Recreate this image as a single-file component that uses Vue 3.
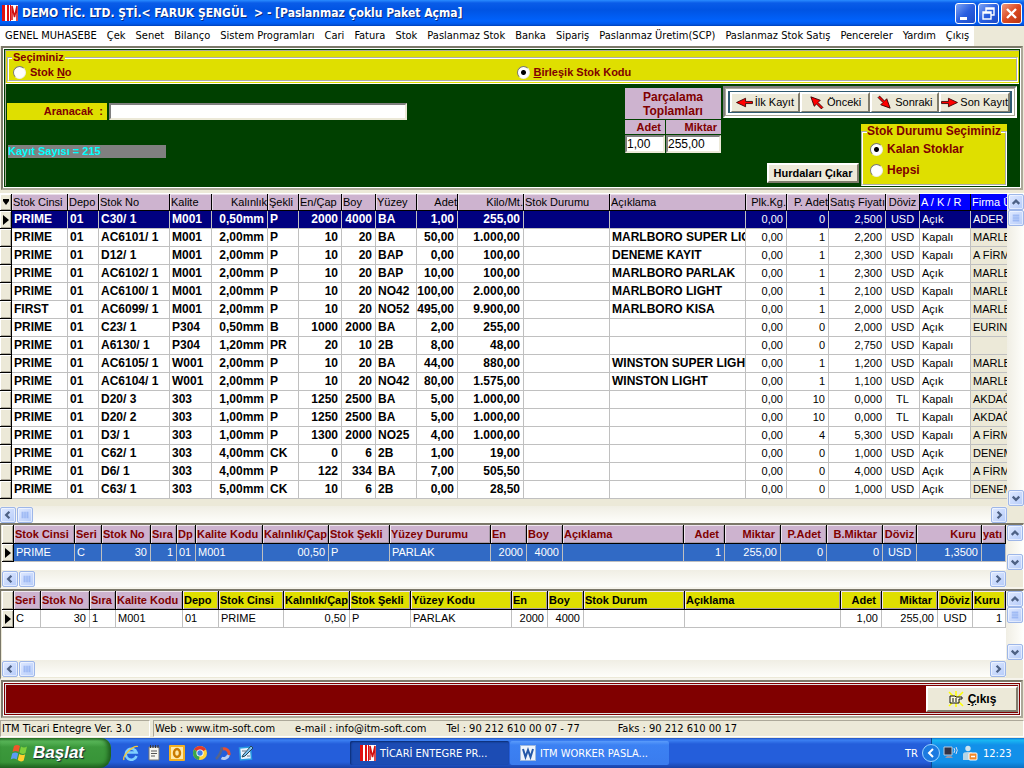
<script setup>
import { ref } from 'vue'

const menu = ['GENEL MUHASEBE', 'Çek', 'Senet', 'Bilanço', 'Sistem Programları', 'Cari', 'Fatura', 'Stok', 'Paslanmaz Stok', 'Banka', 'Sipariş', 'Paslanmaz Üretim(SCP)', 'Paslanmaz Stok Satış', 'Pencereler', 'Yardım', 'Çıkış']

const searchMode = ref('birlesik')
const stockMode = ref('kalan')

const nav = [
  { label: 'İlk Kayıt', turn: 180 },
  { label: 'Önceki', turn: 225 },
  { label: 'Sonraki', turn: 45 },
  { label: 'Son Kayıt', turn: 0 },
]

// column: [title, width, alignment, style]
const stockCols = [
  ['Stok Cinsi', 56, 'l', 'b'], ['Depo', 31, 'l', 'b'], ['Stok No', 71, 'l', 'b'], ['Kalite', 42, 'l', 'b'],
  ['Kalınlık', 56, 'r', 'b'], ['Şekli', 31, 'l', 'b'], ['En/Çap', 43, 'r', 'b', 'l'], ['Boy', 34, 'r', 'b', 'l'],
  ['Yüzey', 41, 'l', 'b'], ['Adet', 41, 'r', 'b'], ['Kilo/Mt.', 66, 'r', 'b'], ['Stok Durumu', 86, 'l', 'b'],
  ['Açıklama', 136, 'l', 'b'], ['Plk.Kg.', 41, 'r', ''], ['P. Adet', 42, 'r', ''], ['Satış Fiyatı', 57, 'r', ''],
  ['Döviz', 34, 'c', ''], ['A / K / R', 51, 'l', 'blue'], ['Firma Ünvanı', 0, 'l', 'blue firm'],
]
const stockRows = [
  'PRIME|01|C30/ 1|M001|0,50mm|P|2000|4000|BA|1,00|255,00|||0,00|0|2,500|USD|Açık|ADER',
  'PRIME|01|AC6101/ 1|M001|2,00mm|P|10|20|BA|50,00|1.000,00||MARLBORO SUPER LIGHT|0,00|1|2,200|USD|Kapalı|MARLB',
  'PRIME|01|D12/ 1|M001|2,00mm|P|10|20|BAP|0,00|100,00||DENEME KAYIT|0,00|1|2,300|USD|Kapalı|A FİRM',
  'PRIME|01|AC6102/ 1|M001|2,00mm|P|10|20|BAP|10,00|100,00||MARLBORO PARLAK|0,00|1|2,300|USD|Açık|MARLB',
  'PRIME|01|AC6100/ 1|M001|2,00mm|P|10|20|NO42|100,00|2.000,00||MARLBORO LIGHT|0,00|1|2,100|USD|Kapalı|MARLB',
  'FIRST|01|AC6099/ 1|M001|2,00mm|P|10|20|NO52|495,00|9.900,00||MARLBORO KISA|0,00|1|2,000|USD|Açık|MARLB',
  'PRIME|01|C23/ 1|P304|0,50mm|B|1000|2000|BA|2,00|255,00|||0,00|0|2,000|USD|Açık|EURIN',
  'PRIME|01|A6130/ 1|P304|1,20mm|PR|20|10|2B|8,00|48,00|||0,00|0|2,750|USD|Kapalı|',
  'PRIME|01|AC6105/ 1|W001|2,00mm|P|10|20|BA|44,00|880,00||WINSTON SUPER LIGHT|0,00|1|1,200|USD|Kapalı|MARLB',
  'PRIME|01|AC6104/ 1|W001|2,00mm|P|10|20|NO42|80,00|1.575,00||WINSTON LIGHT|0,00|1|1,100|USD|Açık|MARLB',
  'PRIME|01|D20/ 3|303|1,00mm|P|1250|2500|BA|5,00|1.000,00|||0,00|10|0,000|TL|Kapalı|AKDAĞ',
  'PRIME|01|D20/ 2|303|1,00mm|P|1250|2500|BA|5,00|1.000,00|||0,00|10|0,000|TL|Kapalı|AKDAĞ',
  'PRIME|01|D3/ 1|303|1,00mm|P|1300|2000|NO25|4,00|1.000,00|||0,00|4|5,300|USD|Kapalı|A FİRM',
  'PRIME|01|C62/ 1|303|4,00mm|CK|0|6|2B|1,00|19,00|||0,00|0|1,000|USD|Açık|DENEM',
  'PRIME|01|D6/ 1|303|4,00mm|P|122|334|BA|7,00|505,50|||0,00|0|4,000|USD|Açık|A FİRM',
  'PRIME|01|C63/ 1|303|5,00mm|CK|10|6|2B|0,00|28,50|||0,00|0|1,000|USD|Açık|DENEM',
]
const packCols = [
  ['Stok Cinsi', 61, 'l', ''], ['Seri', 27, 'l', ''], ['Stok No', 49, 'r', '', 'l'], ['Sıra', 26, 'r', '', 'l'],
  ['Dp', 19, 'l', ''], ['Kalite Kodu', 67, 'l', ''], ['Kalınlık/Çap', 66, 'r', '', 'l'], ['Stok Şekli', 61, 'l', ''],
  ['Yüzey Durumu', 101, 'l', ''], ['En', 36, 'r', '', 'l'], ['Boy', 36, 'r', '', 'l'], ['Açıklama', 121, 'l', ''],
  ['Adet', 41, 'r', ''], ['Miktar', 56, 'r', ''], ['P.Adet', 46, 'r', ''], ['B.Miktar', 56, 'r', ''],
  ['Döviz', 34, 'c', ''], ['Kuru', 65, 'r', ''], ['yatı', 0, 'l', ''],
]
const pieceCols = [
  ['Seri', 27, 'l', ''], ['Stok No', 49, 'r', '', 'l'], ['Sıra', 26, 'l', ''], ['Kalite Kodu', 67, 'l', ''],
  ['Depo', 36, 'l', 'gold'], ['Stok Cinsi', 65, 'l', 'gold'], ['Kalınlık/Çap', 66, 'r', 'gold', 'l'], ['Stok Şekli', 61, 'l', 'gold'],
  ['Yüzey Kodu', 101, 'l', 'gold'], ['En', 36, 'r', 'gold', 'l'], ['Boy', 36, 'r', 'gold', 'l'], ['Stok Durum', 101, 'l', 'gold'],
  ['Açıklama', 156, 'l', 'gold'], ['Adet', 41, 'r', 'gold'], ['Miktar', 56, 'r', 'gold'], ['Döviz', 35, 'c', 'gold'], ['Kuru', 0, 'r', 'gold', 'l'],
]

const grids = [
  { name: 'stock', thumb: true, cols: stockCols, rows: stockRows.map(r => r.split('|')) },
  { name: 'pack', thumb: false, cols: packCols, rows: ['PRIME|C|30|1|01|M001|00,50|P|PARLAK|2000|4000||1|255,00|0|0|USD|1,3500|'.split('|')] },
  { name: 'piece', thumb: true, cols: pieceCols, rows: ['C|30|1|M001|01|PRIME|0,50|P|PARLAK|2000|4000|||1,00|255,00|USD|1'.split('|')] },
]
const colWidth = c => (c[1] ? { width: c[1] + 'px' } : {})
</script>

<template>
  <div class="screen">
    <header class="titlebar">
      <svg class="logo" viewBox="0 0 16 16"><rect width="16" height="16" fill="#fff" /><path d="M0 0h3v16H0zM5 0h2v16H5zM8 0h1v16H8z" fill="#e01010" /><path d="M10 15V1l2.500 11L15 1v15" fill="none" stroke="#d01010" stroke-width="1.500" /></svg>
      <h1>DEMO TİC. LTD. ŞTİ.&lt; FARUK ŞENGÜL &nbsp;&gt; - [Paslanmaz Çoklu Paket Açma]</h1>
      <div class="winbtns">
        <button aria-label="Küçült"><svg viewBox="0 0 19 19"><path d="M4 13h7v3H4z" fill="#fff" /></svg></button>
        <button aria-label="Geri yükle"><svg viewBox="0 0 19 19"><path d="M7 8V4h8v7h-3M7 5h8M4 8h8v7H4zM4 9h8" fill="none" stroke="#fff" stroke-width="1.400" /></svg></button>
        <button class="close" aria-label="Kapat"><svg viewBox="0 0 19 19"><path d="M5 5l9 9M14 5l-9 9" stroke="#fff" stroke-width="2.400" /></svg></button>
      </div>
    </header>

    <nav class="menubar"><div class="menuitems"><a v-for="m in menu" :key="m" href="#">{{ m }}</a></div></nav>

    <section class="panel">
      <div class="panel-in">
        <div class="choice">
          <fieldset class="group">
            <legend>Seçiminiz</legend>
            <label><input v-model="searchMode" type="radio" name="search" value="stok"><span>Stok <u>N</u>o</span></label>
            <label><input v-model="searchMode" type="radio" name="search" value="birlesik"><span><u>B</u>irleşik Stok Kodu</span></label>
          </fieldset>
        </div>
        <div class="work">
          <div class="search">
            <div class="searchrow">
              <label for="aranacak">Aranacak &nbsp;:</label>
              <input id="aranacak" type="text">
            </div>
            <output class="count">Kayıt Sayısı = 215</output>
          </div>
          <div class="totals">
            <h2>Parçalama<br>Toplamları</h2>
            <label for="adet">Adet</label><label for="miktar">Miktar</label>
            <input id="adet" type="text" value="1,00"><input id="miktar" type="text" value="255,00">
          </div>
          <div class="actions">
            <div class="navbar">
              <div class="navin">
                <button v-for="n in nav" :key="n.label">
                  <svg viewBox="-8 -8 16 16"><path :transform="`rotate(${n.turn})`" d="M-7.500-1H-1V-4L7.500 0-1 4V1H-7.500z" fill="#f00" stroke="#300" stroke-width=".8" /></svg>{{ n.label }}
                </button>
              </div>
            </div>
            <div class="lower">
              <button class="scrap">Hurdaları Çıkar</button>
              <div class="stockbox">
                <fieldset class="group">
                  <legend>Stok Durumu Seçiminiz</legend>
                  <label><input v-model="stockMode" type="radio" name="stock" value="kalan"><span>Kalan Stoklar</span></label>
                  <label><input v-model="stockMode" type="radio" name="stock" value="hepsi"><span>Hepsi</span></label>
                </fieldset>
              </div>
            </div>
          </div>
        </div>
      </div>
    </section>

    <section v-for="g in grids" :key="g.name" class="grid" :class="g.name">
      <div class="body">
        <table>
          <colgroup><col class="mark"><col v-for="c in g.cols" :key="c[0]" :style="colWidth(c)"></colgroup>
          <thead>
            <tr>
              <th class="ind"><svg v-if="g.name === 'stock'" viewBox="0 0 10 10"><path d="M2 2h6v2L5 8 2 4z" /></svg></th>
              <th v-for="c in g.cols" :key="c[0]" :class="[c[4] || c[2], c[3]]"><div>{{ c[0] }}</div></th>
            </tr>
          </thead>
          <tbody>
            <tr v-for="(r, i) in g.rows" :key="i" :class="{ sel: i === 0 && g.name !== 'piece' }">
              <th class="ind" scope="row"><svg v-if="i === 0" viewBox="0 0 10 10"><path d="M2 0v10l6-5z" /></svg></th>
              <td v-for="(v, j) in r" :key="j" :class="[g.cols[j][2], g.cols[j][3]]"><div>{{ v }}</div></td>
            </tr>
          </tbody>
        </table>
      </div>
      <div class="vbar">
        <button aria-label="Yukarı"><svg viewBox="0 0 15 15"><path d="M4 9.500L7.500 6 11 9.500" /></svg></button>
        <i v-if="g.thumb" class="thumb"><svg viewBox="0 0 15 15"><path d="M4 4.500h7M4 6.500h7M4 8.500h7M4 10.500h7" /></svg></i>
        <button class="end" aria-label="Aşağı"><svg viewBox="0 0 15 15"><path d="M4 6L7.500 9.500 11 6" /></svg></button>
      </div>
      <div class="hbar">
        <button aria-label="Sola"><svg viewBox="0 0 15 15"><path d="M9 4L5.500 7.500 9 11" /></svg></button>
        <i class="thumb"><svg viewBox="0 0 15 15"><path d="M4.500 4v7M6.500 4v7M8.500 4v7M10.500 4v7" /></svg></i>
        <button class="end" aria-label="Sağa"><svg viewBox="0 0 15 15"><path d="M6 4l3.500 3.500L6 11" /></svg></button>
      </div>
    </section>

    <section class="exit">
      <div class="exit-in">
        <button>
          <svg viewBox="0 0 16 16"><path d="M8 8L1 1M8 8L15 1M8 8V0M8 8v8M8 8l-7 7M8 8l7 7" stroke="#ff0" stroke-width="1.500" /><path d="M2 5h5l1 1h6v2h-3v4H2z" fill="#fffce0" stroke="#111" /><path d="M4 8h2M7 8h2M4 10h2M7 10h2" stroke="#111" /></svg>
          <span><u>Ç</u>ıkış</span>
        </button>
      </div>
    </section>

    <footer class="status">
      <div class="ver">ITM Ticari Entegre Ver. 3.0</div>
      <div class="info"><span>Web : www.itm-soft.com</span><span>e-mail : info@itm-soft.com</span><span>Tel : 90 212 610 00 07 - 77</span><span>Faks : 90 212 610 00 17</span></div>
    </footer>

    <div class="taskbar">
      <button class="start">
        <svg viewBox="0 0 20 20"><path d="M4 3q3-2 6 0L8.500 9q-3-2-6 0z" fill="#f0562a" /><path d="M11 3.500q3 2 6 0L15.500 10q-3 2-6-.5z" fill="#7ed03c" /><path d="M2.200 10.500q3-2 6 0L6.700 16.500q-3-2-6 0z" fill="#5b9cf5" /><path d="M9.200 11q3 2 6 .2L13.700 17.500q-3 2-6-.5z" fill="#ffcf2e" /></svg>
        <span>Başlat</span>
      </button>
      <div class="quick">
        <button aria-label="Internet Explorer"><svg viewBox="0 0 16 16"><path d="M13.500 11A5.500 5.500 0 1 1 13.500 7.500H4" fill="none" stroke="#7fd0ff" stroke-width="2.600" /><path d="M1 15C-1 11 10 0 15 1.500" fill="none" stroke="#f5c83a" stroke-width="1.300" /></svg></button>
        <button aria-label="Not Defteri"><svg viewBox="0 0 16 16"><path d="M3 2h10v13H3z" fill="#f7f7f0" stroke="#777" /><path d="M5 6h6M5 8.500h6M5 11h4" stroke="#555" /><path d="M4.500 0v3M7 0v3M9.500 0v3M12 0v3" stroke="#333" /></svg></button>
        <button aria-label="Outlook"><svg viewBox="0 0 16 16"><rect width="16" height="16" rx="1" fill="#f3b021" /><rect x="2" y="2" width="12" height="12" fill="#ffe9a8" /><ellipse cx="8" cy="8" rx="3" ry="4" fill="none" stroke="#c97a00" stroke-width="2.400" /></svg></button>
        <button aria-label="Chrome"><svg viewBox="0 0 16 16"><circle cx="8" cy="8" r="7" fill="#ffd43a" /><path d="M8 8L2 4.500A7 7 0 0 1 14 4.500z" fill="#e0392c" /><path d="M8 8L2 4.500A7 7 0 0 0 7 15z" fill="#3aa64a" /><circle cx="8" cy="8" r="3.600" fill="#fff" /><circle cx="8" cy="8" r="2.700" fill="#3d7fe8" /></svg></button>
        <button aria-label="Senkronizasyon"><svg viewBox="0 0 16 16" fill="none" stroke-width="3"><path d="M7 2q-1 7-6 12" stroke="#56648c" stroke-width="2.500" /><path d="M8 4a5 5 0 0 1 6 6" stroke="#e8502f" /><path d="M13.500 10a5 5 0 0 1-7 3" stroke="#b9cdf0" /></svg></button>
        <button aria-label="Masaüstünü Göster"><svg viewBox="0 0 16 16"><path d="M1.500 3l11-1 1 12-11 1z" fill="#e8f4ff" stroke="#2a9be0" stroke-width="1.500" /><path d="M5 10L13 1l2 2-8 8-3 1z" fill="#7ec3f2" stroke="#245" /><path d="M4 6h4M9 11h3" stroke="#678" /></svg></button>
      </div>
      <div class="tasks">
        <button class="active"><svg viewBox="0 0 16 16"><rect width="16" height="16" fill="#fff" /><path d="M0 0h3v16H0zM5 0h2v16H5zM8 0h1v16H8z" fill="#e01010" /><path d="M10 15V1l2.500 11L15 1v15" fill="none" stroke="#d01010" stroke-width="1.500" /></svg>TİCARİ ENTEGRE PR...</button>
        <button><svg viewBox="0 0 16 16"><rect x=".5" y=".5" width="15" height="15" fill="#eef4fc" stroke="#9db8dd" /><path d="M3 4l2.500 8L8 5l2.500 7L13 4" fill="none" stroke="#2458a8" stroke-width="2" /></svg>ITM WORKER PASLA...</button>
      </div>
      <span class="lang">TR</span>
      <div class="tray">
        <button class="more" aria-label="Gizli simgeleri göster"><svg viewBox="0 0 16 16"><path d="M10 4L6 8l4 4" fill="none" stroke="#fff" stroke-width="2" /></svg></button>
        <svg viewBox="0 0 16 16"><path d="M1 2h8v8H1z" fill="#334" stroke="#bcd" /><path d="M2 13l2-2h4l2 2z" fill="#99a" /><path d="M11 3q1.500 2 0 5M13 2q2.500 3 0 7" fill="none" stroke="#dde" /></svg>
        <svg viewBox="0 0 16 16"><circle cx="6" cy="3.500" r="2.700" fill="#cfe4ee" /><path d="M1 15V9q0-2 5-2t5 2v6z" fill="#b5d6e6" /><rect x="7" y="8" width="8" height="7" rx="1" fill="#f08a2c" stroke="#fff" /><path d="M9 11.500h4" stroke="#fff" stroke-width="1.500" /></svg>
        <time>12:23</time>
      </div>
    </div>
  </div>
</template>

<style>
body { margin: 0; background: #ece9d8; overflow: hidden; }
</style>

<style scoped>
* { box-sizing: border-box; }
.screen { display: flex; flex-direction: column; min-height: 100vh; overflow: hidden; background: #ece9d8; color: #000; font: 11px/13px "Liberation Sans", Arial, sans-serif; }
button, input { font: inherit; color: inherit; margin: 0; padding: 0; border-radius: 0; }
a { color: inherit; text-decoration: none; }
svg { display: block; flex: none; }
h1, h2 { margin: 0; font-size: inherit; }

.titlebar { display: flex; align-items: center; height: 26px; padding: 0 2px; color: #fff; background: linear-gradient(#2a8cff 0, #0a5ce8 3px, #0054e3 10px, #0062fc 21px, #0058ea 24px, #0040b8); }
.logo { width: 16px; height: 16px; }
h1 { flex: 1; margin-left: 4px; font: bold 12px/20px "DejaVu Sans Condensed", "DejaVu Sans", sans-serif; text-shadow: 1px 1px #0a2a80; white-space: nowrap; }
.winbtns { display: flex; gap: 2px; }
.winbtns button { width: 21px; height: 21px; border: 1px solid #fff; border-radius: 3px; background: linear-gradient(135deg, #7ea4f4, #2a5fe0 50%, #1c4bc8); }
.winbtns svg { width: 19px; height: 19px; }
.winbtns .close { background: linear-gradient(135deg, #f09a80, #dc4a22 50%, #b83510); }

.menubar { height: 20px; }
.menuitems { display: flex; gap: 10px; width: max-content; height: 20px; padding: 0 5px; background: #fff; font: 11px/19px "DejaVu Sans Condensed", "DejaVu Sans", sans-serif; white-space: nowrap; }

.panel { margin: 0 1px; border: 2px solid #7b7869; border-right-color: #aca899; border-bottom-color: #aca899; background: #004000; }
.panel-in { border: 1px solid #fff; outline: 1px solid #004000; outline-offset: -2px; padding: 1px; }
.choice { background: #dfdf00; border-left: 1px solid #aca899; border-top: 1px solid #aca899; border-bottom: 1px solid #fff; }
.group { margin: 0 1px 1px; padding: 0; min-width: 0; border: 2px groove #fff; color: #800000; font-weight: bold; }
.choice .group { display: grid; grid-template-columns: 1fr 1fr; height: 31px; padding: 0; }
.group legend { padding: 0 1px; white-space: nowrap; }
.choice legend { margin-left: 3px; height: 14px; }
.choice label { margin-left: 4px; }
.group label { display: flex; align-items: center; gap: 4px; height: 15px; }
.group input { appearance: none; width: 13px; height: 13px; flex: none; border: 1px solid; border-color: #777 #eee #eee #777; border-radius: 50%; background: #fff; }
.group input:checked { background: radial-gradient(circle, #000 0 2px, #fff 3px); }

.work { display: flex; min-height: 102px; border-left: 1px solid #aca899; }
.search { flex: 1; padding: 19px 1px 0; color: #800000; font-weight: bold; }
.searchrow { display: flex; gap: 2px; }
.searchrow label { width: 100px; height: 17px; padding-right: 4px; line-height: 17px; text-align: right; background: #dfdf00; }
input[type=text] { min-width: 0; border: 2px solid; border-color: #808080 #ece9d8 #ece9d8 #808080; background: #fff; outline: 0; }
.searchrow input { width: 298px; height: 17px; }
.count { display: block; width: 158px; height: 13px; margin-top: 25px; margin-left: 1px; color: #0ff; background: #808080; }
.totals { display: grid; grid-template-columns: 40px 55px; grid-template-rows: 31px 14px 18px; gap: 1px; align-content: start; padding-top: 4px; margin-right: 2px; color: #800000; }
.totals h2 { grid-column: span 2; padding-top: 2px; background: #cdb3cf; text-align: center; line-height: 14px; font-size: 12px; }
.totals label { padding-right: 4px; line-height: 15px; font-weight: bold; text-align: right; background: #cdb3cf; }
.totals input { width: 100%; height: 18px; color: #000; font-size: 12px; }
.actions { width: 296px; padding-top: 2px; }
.navbar { width: 294px; height: 32px; padding: 1px; border: 2px solid; border-color: #808080 #fff #fff #808080; background: #aca899; }
.navin { display: grid; grid-template-columns: repeat(4, 1fr); height: 26px; padding: 1px 2px; border: 2px solid #fff; outline: 1px solid #2f5a72; outline-offset: -3px; background: #2f5a72; }
.navin button { display: flex; align-items: center; justify-content: center; gap: 2px; white-space: nowrap; }
.navin svg { width: 17px; height: 17px; }
.navin button, .scrap, .exit button { border: 2px solid; border-color: #fff #807c6c #807c6c #fff; background: #ece9d8; }
.lower { display: flex; justify-content: flex-end; align-items: flex-end; gap: 2px; margin-top: 6px; padding-right: 12px; }
.scrap { width: 92px; height: 20px; margin-bottom: 3px; font-weight: bold; }
.stockbox { width: 146px; background: #dfdf00; }
.stockbox .group { height: 62px; margin: 0; padding: 0 4px; font-size: 12px; }
.stockbox legend { height: 15px; padding: 0; line-height: 15px; }
.stockbox label { height: 21px; margin-left: 3px; }

.grid { display: grid; grid-template-columns: minmax(0, 1fr) 17px; grid-template-rows: auto 17px; background: #ece9d8; }
.grid .body { overflow: hidden; background: #fff; }
.stock { margin-top: 3px; border-top: 1px solid #fff; }
.stock .body { padding-bottom: 7px; background: #ece9d8; }
.pack, .piece { padding-left: 1px; border: solid #7b7869; border-width: 2px 1px 0; border-right-color: #fff; }
.pack .body { min-height: 45px; }
.piece .body { min-height: 69px; }
.pack { border-bottom: 2px solid #f6f4ec; }
.piece { border-bottom: 2px solid #f6f4ec; padding-bottom: 1px; }
table { width: 100%; table-layout: fixed; border-collapse: separate; border-spacing: 0; }
.mark { width: 12px; }
th, td { height: 18px; padding: 0; border: 0 solid #c0c0c0; border-width: 0 1px 1px 0; background: #fff; font-weight: normal; }
th div, td div { display: flex; height: 17px; padding: 0 2px; line-height: 17px; overflow: hidden; white-space: nowrap; }
.r div { justify-content: flex-end; }
.c div { justify-content: center; }
td.r div { padding-right: 3px; }
thead th { height: 17px; background: #cdb3cf; border-color: #000; box-shadow: inset 1px 1px #e8dce8; }
thead th div { height: 16px; padding: 0 1px; line-height: 17px; }
.stock thead .r div { padding: 0; }
.stock td.b { font-size: 12px; font-weight: bold; }
.stock td:last-child, .stock th:last-child { border-right: 0; }
.stock td.firm { background: #ece9d8; }
thead th.blue { background: #00f; color: #fff; box-shadow: none; }
.stock .sel td { background: #000080; color: #fff; }
.pack .sel td { background: #316ac5; color: #fff; }
.pack thead th, .piece thead th { height: 19px; color: #800000; font-weight: bold; border-right-color: #000; box-shadow: inset 1px 1px #efe6ef, inset -1px -1px #a89aa8; }
.pack thead div, .piece thead div { height: 18px; line-height: 18px; }
.pack thead .r div, .piece thead .r div { padding-right: 5px; }
.piece thead th.gold { background: #dfdf00; color: #000; }
th.ind, thead th.ind { background: #ece9d8; border-color: #000; box-shadow: inset 1px 1px #fff, inset -1px -1px #aca899; }
.ind svg { width: 10px; height: 10px; margin: 0 auto; }

.vbar, .hbar { display: flex; }
.vbar { flex-direction: column; align-items: center; background: linear-gradient(90deg, #f0eee4, #fefefb); }
.hbar { grid-column: 1; align-items: center; background: linear-gradient(#f0eee4, #fefefb); }
.vbar .end { margin-top: auto; }
.hbar .end { margin-left: auto; }
.vbar button, .hbar button, .thumb { display: flex; align-items: center; justify-content: center; width: 16px; height: 16px; border: 1px solid #9db6e8; border-radius: 2px; background: linear-gradient(135deg, #dfe9ff, #b6ccfa); box-shadow: inset 0 0 0 1px #fff8; }
.hbar .thumb { margin-left: 1px; }
.vbar svg, .hbar svg { width: 14px; height: 14px; }
.vbar path, .hbar path { fill: none; stroke: #4d6185; stroke-width: 2.400; }
.vbar .thumb path, .hbar .thumb path { stroke: #87a8ef; stroke-width: 1; }

.exit { flex: 1; min-height: 38px; border: 2px solid #7b7869; border-right-color: #aca899; border-bottom-color: #aca899; margin: 0 1px; padding: 1px; background: #fff; }
.exit-in { display: flex; justify-content: flex-end; height: 100%; padding: 2px 1px; border: 1px solid #800000; outline: 1px solid #ddd; outline-offset: -2px; background: #800000; }
.exit button { display: flex; align-items: center; justify-content: center; gap: 4px; width: 92px; height: 26px; font-size: 12px; font-weight: bold; }
.exit svg { width: 16px; height: 16px; }

.status { display: flex; gap: 3px; height: 20px; padding: 2px 0 1px; font: 11px/16px "DejaVu Sans Condensed", "DejaVu Sans", sans-serif; white-space: nowrap; }
.status > div { padding: 0 1px; border: 1px solid; border-color: #aca899 #fff #fff #aca899; }
.ver { width: 150px; }
.info { display: flex; flex: 1; gap: 20px; }
.info span:last-child { margin-left: 18px; }

.taskbar { display: flex; align-items: stretch; height: 30px; color: #fff; font: 11px/13px "DejaVu Sans Condensed", "DejaVu Sans", sans-serif; background: linear-gradient(#1f4fc0, #3c81f3 2px, #245edb 6px, #245edb 24px, #1941a5); }
.taskbar button { border: 0; background: none; }
.taskbar .start { display: flex; align-items: center; gap: 3px; width: 111px; padding-left: 10px; border-radius: 0 10px 12px 0; background: linear-gradient(#2c7a2c, #5ab85a 3px, #3c993c 9px, #389438 24px, #226822); box-shadow: inset -3px 0 4px #1d5c1d; font: italic bold 17px/20px "Liberation Sans", Arial, sans-serif; text-shadow: 1px 1px 1px #123; }
.start svg { width: 20px; height: 20px; }
.quick { display: flex; align-items: center; gap: 7px; width: 239px; padding-left: 12px; }
.quick svg, .tasks svg, .tray svg { width: 16px; height: 16px; }
.tasks { display: flex; flex: 1; gap: 1px; padding: 3px 0; }
.taskbar .tasks button { display: flex; align-items: center; gap: 4px; width: 159px; padding: 0 10px; border-radius: 2px; background: linear-gradient(#5a9bfb, #3c81f3 4px, #3a7cee); white-space: nowrap; }
.taskbar .tasks .active { background: #1c4cb4; box-shadow: inset 1px 1px 2px #0a2a70; }
.lang { align-self: center; width: 26px; }
.tray { display: flex; align-items: center; gap: 3px; width: 93px; background: linear-gradient(#0d6fd0, #19b9f3 2px, #1290e9 7px, #1290e9 24px, #0d6fc0); border-left: 1px solid #0a4a90; }
.taskbar .more { width: 18px; height: 18px; margin-left: -10px; border-radius: 50%; border: 1px solid #9cd4ff; background: #1c7ae0; }
.tray time { margin-left: 2px; }
</style>
